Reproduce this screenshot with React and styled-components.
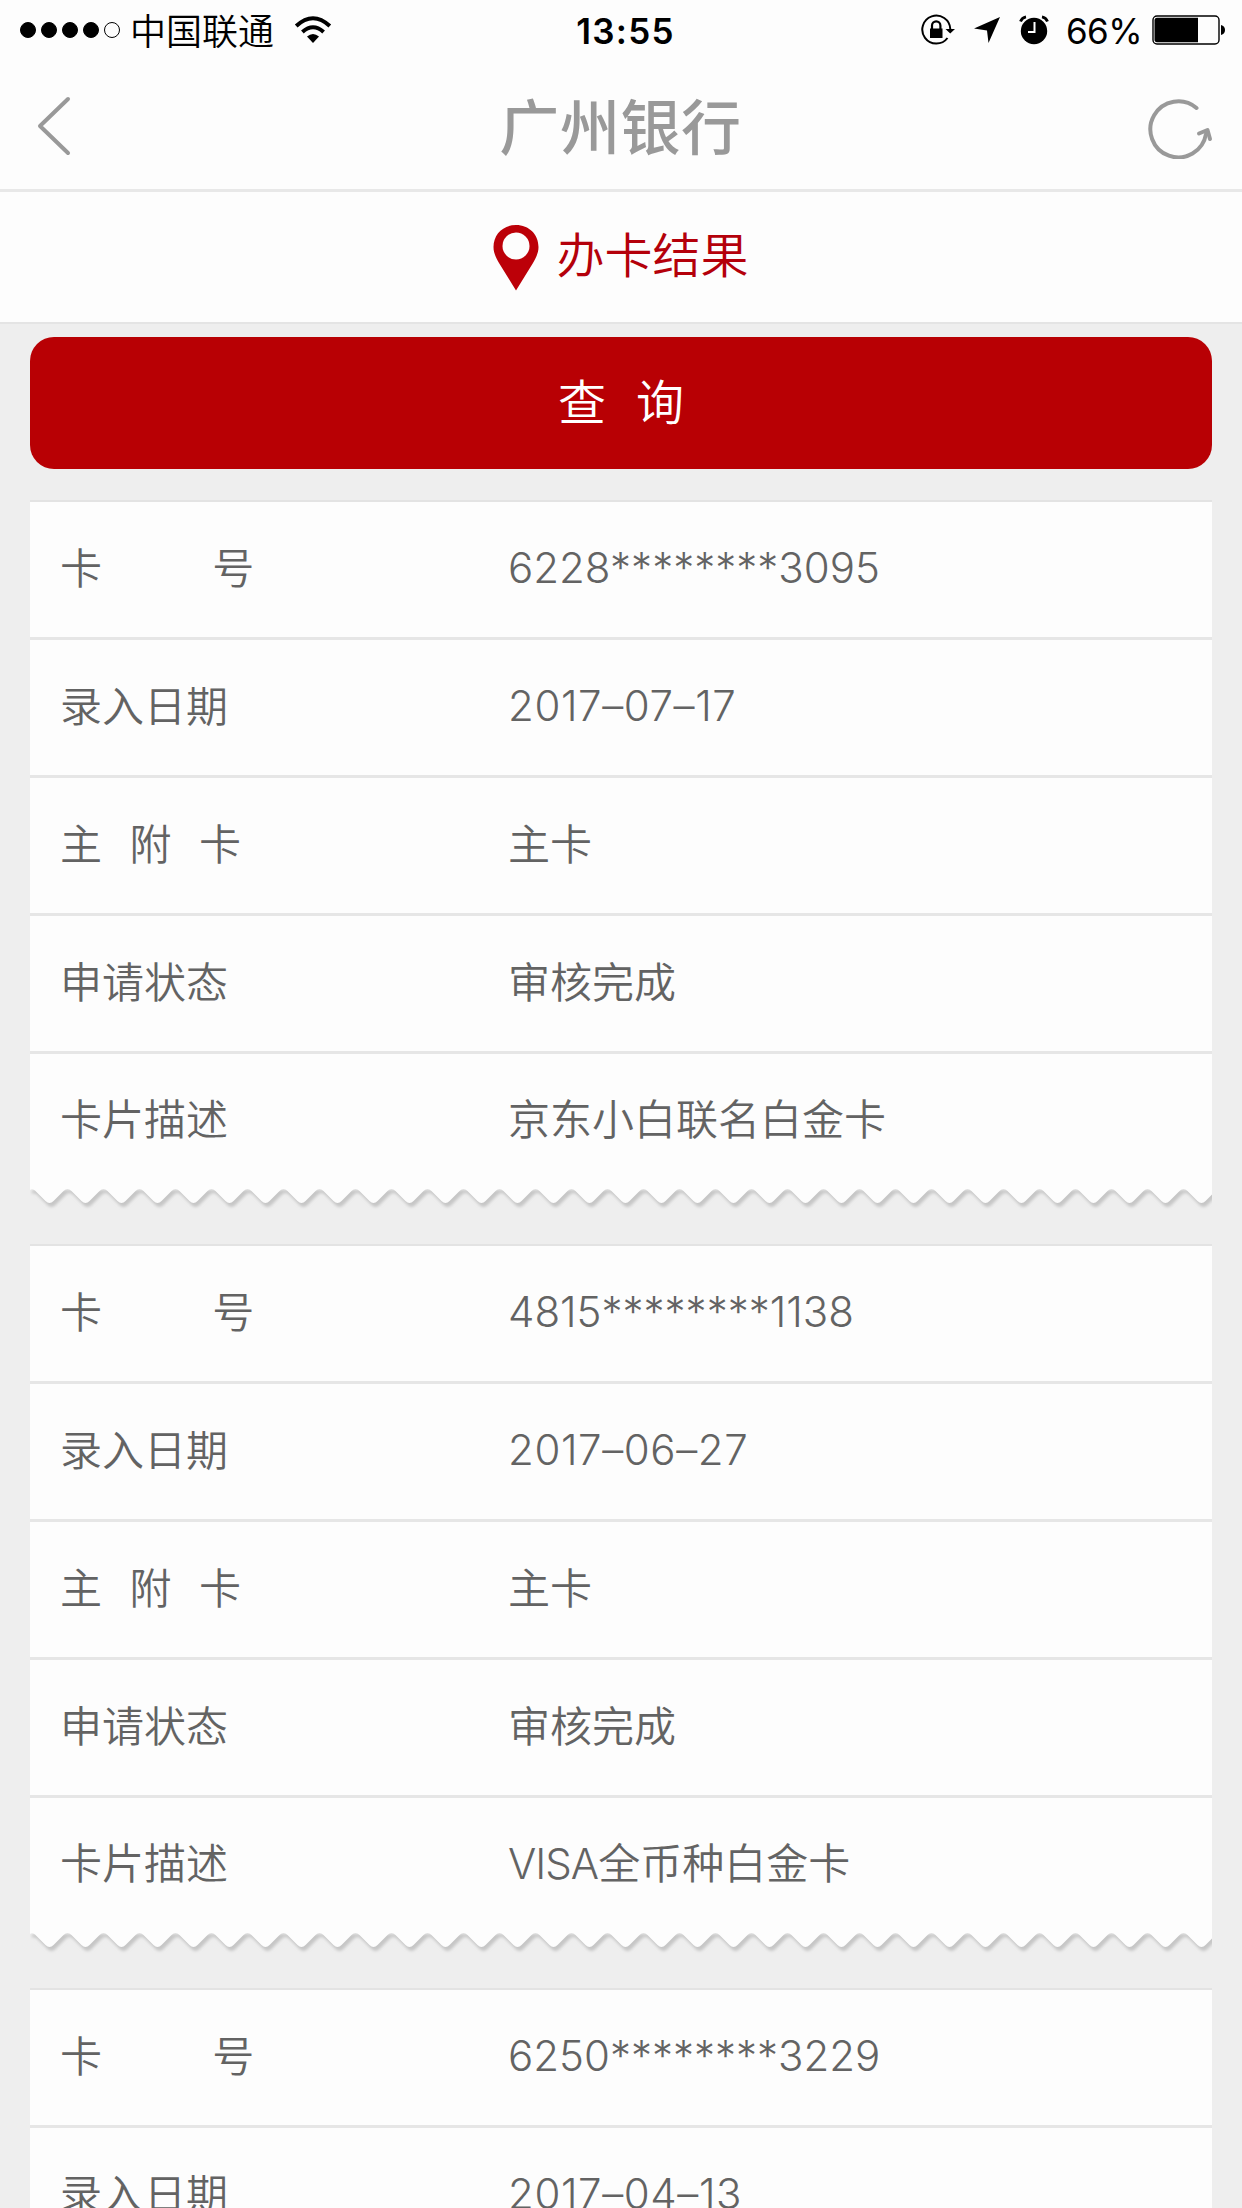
import React from 'react';
import styled, { createGlobalStyle } from 'styled-components';

const cjk = "'Noto Sans CJK SC', sans-serif";
const latin = "Inter, 'Noto Sans CJK SC', sans-serif";

const GlobalStyle = createGlobalStyle`
  * {
    box-sizing: border-box;
  }

  body {
    margin: 0;
    background: #eeeeee;
  }
`;

const Screen = styled.div`
  width: 1242px;
  height: 2208px;
  overflow: hidden;
  background: #eeeeee;
  font-family: ${cjk};
  color: #636363;
`;

const StatusBar = styled.div`
  display: grid;
  grid-template-columns: 1fr auto 1fr;
  align-items: center;
  height: 60px;
  padding: 0 16px 0 20px;
  background: #fdfdfd;
  color: #000;
`;

const StatusSide = styled.div`
  display: flex;
  align-items: center;
  justify-content: ${props => (props.$end ? 'flex-end' : 'flex-start')};
  height: 60px;
`;

const Signal = styled.div`
  display: flex;
  gap: 5px;
  margin-right: 10px;
`;

const Dot = styled.span`
  width: 16px;
  height: 16px;
  border: 1px solid #000;
  border-radius: 50%;
  background: ${props => (props.$on ? '#000' : 'transparent')};
`;

const Carrier = styled.span`
  padding-bottom: 1px;
  font-size: 36px;
  font-weight: 350;
  line-height: 57px;
  margin-right: 20px;
`;

const Clock = styled.span`
  padding: 2px 0 0 5px;
  font: 600 35px/58px ${latin};
  letter-spacing: 1.2px;
`;

const Indicators = styled.div`
  display: flex;
  align-items: center;
  gap: 19px;
`;

const Percent = styled.span`
  font: 400 35px/60px ${latin};
  margin: 1px 10px 0 17px;
  letter-spacing: -0.6px;
`;

const NavBar = styled.div`
  display: flex;
  align-items: center;
  justify-content: space-between;
  height: 132px;
  padding: 0 28px 0 35px;
  background: #fdfdfd;
  border-bottom: 3px solid #e8e8e8;
`;

const Title = styled.h1`
  margin: 0;
  padding: 0 0 2px 22px;
  font-size: 60px;
  font-weight: 500;
  line-height: 1;
  letter-spacing: 0.6px;
  color: #999;
`;

const SubHeader = styled.div`
  display: flex;
  align-items: center;
  justify-content: center;
  gap: 17px;
  height: 132px;
  background: #fdfdfd;
  border-bottom: 2px solid #e4e4e4;
`;

const SubTitle = styled.span`
  padding-bottom: 10px;
  font-size: 48px;
  font-weight: 350;
  line-height: 1;
  color: #b4000a;
`;

const Content = styled.div`
  padding: 13px 30px 0;
`;

const QueryButton = styled.button`
  display: block;
  width: 100%;
  height: 132px;
  margin-bottom: 31px;
  padding: 0 0 8px;
  border: 0;
  border-radius: 24px;
  background: #b80004;
  font-family: ${cjk};
  font-size: 48px;
  font-weight: 350;
  line-height: 1;
  white-space: pre;
  word-spacing: 4.2px;
  color: #fff;
`;

const Card = styled.section`
  height: 744px;
  border-top: 2px solid #e3e3e3;
`;

const Row = styled.div`
  display: grid;
  grid-template-columns: 448px 1fr;
  align-items: center;
  height: 138px;
  padding: 0 30px;
  background: #fdfdfd;
  border-bottom: 3px solid #e6e6e6;

  &:nth-of-type(5) {
    height: 134px;
    border-bottom: 0;
  }
`;

const Label = styled.span`
  padding-bottom: 8px;
  font-size: 42px;
  font-weight: 350;
  line-height: 60px;
  white-space: pre;
  word-spacing: 4.4px;
`;

const Value = styled.span`
  padding-bottom: ${props => (props.$numeric ? 3 : 8)}px;
  font-family: ${props => (props.$numeric ? latin : cjk)};
  font-size: 42px;
  font-weight: 350;
  line-height: 60px;
  letter-spacing: ${props => props.$spacing || 0}px;
  white-space: nowrap;
`;

const Latin = styled.span`
  font: 350 42px/1 ${latin};
  letter-spacing: -1px;
`;

const Edge = styled.svg`
  display: block;
  overflow: visible;
`;

const records = [
  { number: '6228********3095', date: '2017–07–17', status: '审核完成', desc: '京东小白联名白金卡' },
  { number: '4815********1138', date: '2017–06–27', status: '审核完成', desc: '全币种白金卡', brand: 'VISA' },
  { number: '6250********3229', date: '2017–04–13', status: '审核完成', desc: '' },
];

// one tooth of the torn edge is 36px wide
function zigzag() {
  const step = 36;
  let d = 'M0 -2 L0 2 Q2 0.5 5 2.5';
  for (let i = 0; i < 33; i++) {
    const x = 19.5 + i * step;
    d += ` L${x - 4} 13 Q${x} 17 ${x + 4} 13 L${x + step / 2 - 4} 3 Q${x + step / 2} -1 ${x + step / 2 + 4} 3`;
  }
  return `${d} L1230 -2 Z`;
}

function TornEdge() {
  return (
    <Edge width="1182" height="26" viewBox="0 0 1182 26">
      <defs>
        <clipPath id="edgeClip"><rect x="0" y="-2" width="1182" height="28" /></clipPath>
        <filter id="edgeShade" x="-2%" y="-50%" width="104%" height="200%">
          <feGaussianBlur stdDeviation="1.8" />
        </filter>
      </defs>
      <g clipPath="url(#edgeClip)">
        <path d={zigzag()} transform="translate(2 4)" fill="#c6c6c6" filter="url(#edgeShade)" />
        <path d={zigzag()} fill="#fdfdfd" />
      </g>
    </Edge>
  );
}

function WifiIcon() {
  return (
    <svg width="38" height="30" viewBox="0 0 38 30" fill="none" stroke="#000">
      <path d="M2.2 11 Q19 -4.5 35.8 11" strokeWidth="4" />
      <path d="M8.4 17 Q19 7.5 29.6 17" strokeWidth="4" />
      <path d="M13 21.5 Q19 16.5 25 21.5 L19 28 Z" fill="#000" stroke="none" />
    </svg>
  );
}

function LockIcon() {
  return (
    <svg width="34" height="32" viewBox="0 0 34 32" fill="none" stroke="#000">
      <path d="M29.3 15 A14 14 0 1 0 26.5 24" strokeWidth="2" />
      <path d="M24.5 15 H34 L29.2 19.5 Z" fill="#000" stroke="none" />
      <rect x="9" y="14.5" width="12.5" height="9.5" fill="#000" stroke="none" />
      <path d="M11 15 V11.5 A4.2 4.2 0 0 1 19.4 11.5 V15" strokeWidth="2.2" />
    </svg>
  );
}

function LocationIcon() {
  return (
    <svg width="26" height="26" viewBox="0 0 26 26">
      <path d="M26 0 L14.5 26 L13 13.5 L0 11.5 Z" fill="#000" />
    </svg>
  );
}

function AlarmIcon() {
  return (
    <svg width="30" height="30" viewBox="0 0 30 30" fill="none" stroke="#000">
      <circle cx="15" cy="16" r="13.2" fill="#000" stroke="none" />
      <path d="M1.5 6.5 Q3 2.5 7 1.8 M23 1.8 Q27 2.5 28.5 6.5" strokeWidth="2.8" />
      <path d="M15.5 7 V17 H9" stroke="#fff" strokeWidth="2" />
    </svg>
  );
}

function BatteryIcon() {
  return (
    <svg width="74" height="30" viewBox="0 0 74 30">
      <rect x="1" y="1" width="66" height="28" rx="4" fill="none" stroke="#000" strokeWidth="1.4" />
      <path d="M5 2.8 H46 V27.2 H5 Q2.5 27.2 2.5 24.5 V5.5 Q2.5 2.8 5 2.8 Z" fill="#000" />
      <path d="M69 10 Q73 11 73 15 Q73 19 69 20 Z" fill="#000" />
    </svg>
  );
}

function BackIcon() {
  return (
    <svg width="36" height="62" viewBox="0 0 36 62">
      <path d="M33 5 L5 32 L33 59" fill="none" stroke="#999" strokeWidth="4" strokeLinecap="round" strokeLinejoin="round" />
    </svg>
  );
}

function RefreshIcon() {
  return (
    <svg width="66" height="68" viewBox="0 0 66 68" fill="none" stroke="#999" strokeWidth="4" strokeLinecap="round" strokeLinejoin="round">
      <path d="M48.5 17 A28 28 0 1 0 58 43" />
      <path d="M51 42.5 L59.5 39 L62 48" />
    </svg>
  );
}

function PinIcon() {
  return (
    <svg width="46" height="68" viewBox="0 0 46 68">
      <path d="M23 2 C10 2 0.5 11.5 0.5 24 C0.5 30 3 34.5 6 40 L23 67.5 L40 40 C43 34.5 45.5 30 45.5 24 C45.5 11.5 36 2 23 2 Z" fill="#bc0008" />
      <circle cx="23" cy="23" r="13.5" fill="#fdfdfd" />
    </svg>
  );
}

function Record({ number, date, status, desc, brand }) {
  return (
    <Card>
      <Row>
        <Label>{'卡        号'}</Label>
        <Value $numeric>{number}</Value>
      </Row>
      <Row>
        <Label>录入日期</Label>
        <Value $numeric $spacing={0.6}>{date}</Value>
      </Row>
      <Row>
        <Label>{'主  附  卡'}</Label>
        <Value>主卡</Value>
      </Row>
      <Row>
        <Label>申请状态</Label>
        <Value>{status}</Value>
      </Row>
      <Row>
        <Label>卡片描述</Label>
        <Value>{brand && <Latin>{brand}</Latin>}{desc}</Value>
      </Row>
      <TornEdge />
    </Card>
  );
}

export default function App() {
  return (
    <Screen>
      <GlobalStyle />
      <StatusBar>
        <StatusSide>
          <Signal>
            <Dot $on />
            <Dot $on />
            <Dot $on />
            <Dot $on />
            <Dot />
          </Signal>
          <Carrier>中国联通</Carrier>
          <WifiIcon />
        </StatusSide>
        <Clock>13:55</Clock>
        <StatusSide $end>
          <Indicators>
            <LockIcon />
            <LocationIcon />
            <AlarmIcon />
          </Indicators>
          <Percent>66%</Percent>
          <BatteryIcon />
        </StatusSide>
      </StatusBar>
      <NavBar>
        <BackIcon />
        <Title>广州银行</Title>
        <RefreshIcon />
      </NavBar>
      <SubHeader>
        <PinIcon />
        <SubTitle>办卡结果</SubTitle>
      </SubHeader>
      <Content>
        <QueryButton>{'查  询'}</QueryButton>
        {records.map(record => <Record key={record.number} {...record} />)}
      </Content>
    </Screen>
  );
}
